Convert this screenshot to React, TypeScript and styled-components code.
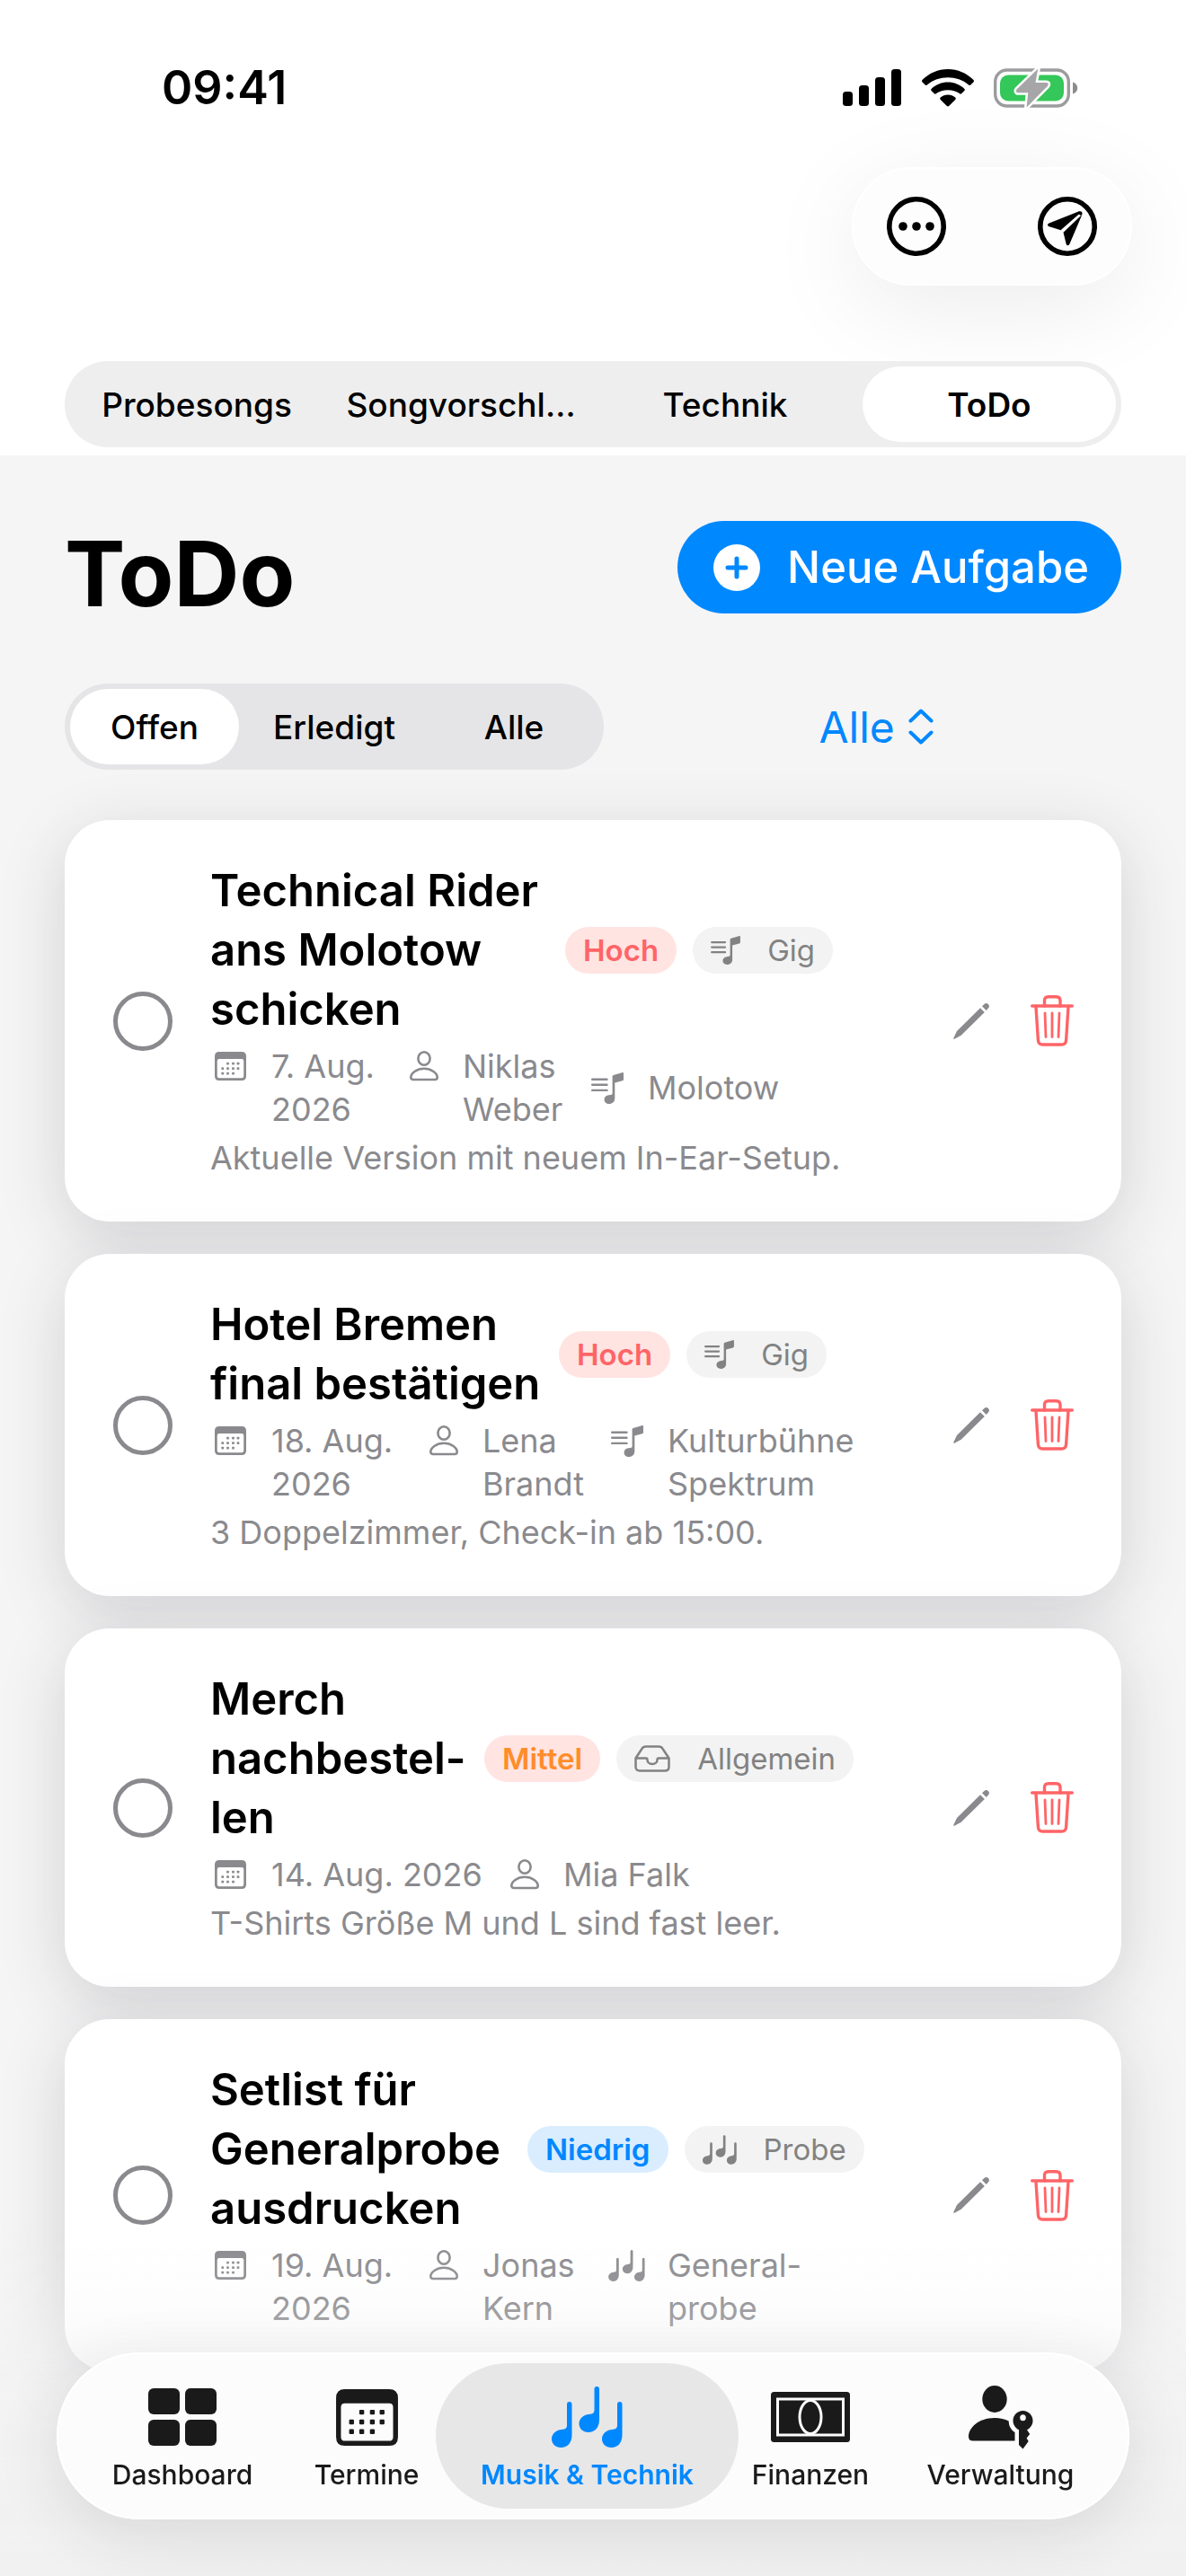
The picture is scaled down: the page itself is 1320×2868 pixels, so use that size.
import React, { useState } from "react";
import styled, { createGlobalStyle } from "styled-components";

const ink = "#000";
const blue = "#0088ff";
const red = "#ff6467";
const gray = "#8a8a8e";

const GlobalStyle = createGlobalStyle`
  *, *::before, *::after { box-sizing: border-box; }
  body {
    margin: 0;
    background: #f5f5f5;
    color: ${ink};
    font-family: Inter, "Liberation Sans", sans-serif;
    -webkit-font-smoothing: antialiased;
  }
  button, select, input { font: inherit; color: inherit; margin: 0; }
  button { border: 0; padding: 0; background: none; cursor: pointer; }
  h1, h2, p, ul { margin: 0; padding: 0; }
  ul { list-style: none; }
  svg { display: block; flex: none; }
`;

/* ---------- icons ---------- */

type IconProps = { width: number; height: number };

const SignalIcon = () => (
  <svg width="66" height="42" viewBox="0 0 66 42" aria-hidden="true">
    <rect x="0" y="25" width="11" height="16" rx="3.500" />
    <rect x="18" y="18" width="11" height="23" rx="3.500" />
    <rect x="36" y="9" width="11" height="32" rx="3.500" />
    <rect x="54" y="0" width="11" height="41" rx="3.500" />
  </svg>
);

const WifiIcon = () => (
  <svg width="58" height="42" viewBox="0 0 58 42" aria-hidden="true">
    <path d="M29 0C40 0 50 4.500 57.300 11.800C58.200 12.700 58.200 13.600 57.400 14.400L54.600 17.200C53.700 18.100 52.700 18.100 51.800 17.300C45.800 12 37.500 9.300 29 9.300C20.500 9.300 12.200 12 6.200 17.300C5.300 18.100 4.300 18.100 3.400 17.200L0.600 14.400C-0.200 13.600 -0.200 12.700 0.700 11.800C8 4.500 18 0 29 0Z" />
    <path d="M29 14.500C36 14.500 42.400 17.200 47.200 21.700C48 22.500 48 23.400 47.200 24.200L44.300 27.100C43.600 27.800 42.700 27.800 41.900 27.100C38.500 24.600 33.900 23.300 29 23.300C24.100 23.300 19.500 24.600 16.100 27.100C15.300 27.800 14.400 27.800 13.700 27.100L10.800 24.200C10 23.400 10 22.500 10.800 21.700C15.600 17.200 22 14.500 29 14.500Z" />
    <path d="M29 28.500C32.200 28.500 35 29.700 37.200 31.600C38 32.300 38 33.200 37.200 34L30.400 40.700C29.500 41.600 28.500 41.600 27.600 40.700L20.800 34C20 33.200 20 32.300 20.800 31.600C23 29.700 25.800 28.500 29 28.500Z" />
  </svg>
);

const BatteryIcon = () => (
  <svg width="94" height="46" viewBox="0 0 94 46" aria-hidden="true">
    <rect x="1.700" y="3" width="81.600" height="40" rx="13" fill="none" stroke="#9c9c9e" strokeWidth="3.400" />
    <rect x="7" y="8.500" width="71" height="29" rx="9" fill="#34c759" />
    <path d="M88 16.500C91.500 17.500 93.200 20 93.200 23S91.500 28.500 88 29.500Z" fill="#8c8c8e" />
    <path d="M49.300 1.500L26 24C24.200 26 24.800 28.300 27.500 28.300H38.200L36.600 44.500L59.800 21C61.500 19 60.800 17 58.200 17H46.500Z" fill="#a6a6a8" stroke="#fff" strokeWidth="5" strokeLinejoin="round" paintOrder="stroke" />
  </svg>
);

const MoreIcon = () => (
  <svg width="66" height="66" viewBox="0 0 66 66" aria-hidden="true">
    <circle cx="33" cy="33" r="30.200" fill="none" stroke="#000" strokeWidth="5.600" />
    <circle cx="18" cy="33" r="4.800" />
    <circle cx="33" cy="33" r="4.800" />
    <circle cx="48" cy="33" r="4.800" />
  </svg>
);

const SendIcon = () => (
  <svg width="66" height="66" viewBox="0 0 66 66" aria-hidden="true">
    <circle cx="33" cy="33" r="30.200" fill="none" stroke="#000" strokeWidth="5.600" />
    <path d="M46 16.300L12.600 29.600C10.500 30.500 10.600 32.700 12.800 33.200L25.600 37.200L47.500 18Z" />
    <path d="M49.400 19.800L28.500 39.800L31.600 52.500C32.200 54.800 34.700 54.800 35.500 52.600Z" />
    <path d="M45.500 16.500C48.600 15.600 50.200 17.200 49.200 20.300L47.300 20.800L45.200 18.700Z" />
  </svg>
);

const PlusIcon = () => (
  <svg width="52" height="52" viewBox="0 0 52 52" aria-hidden="true">
    <circle cx="26" cy="26" r="26" fill="#fff" />
    <path d="M26 16V36M16 26H36" stroke={blue} strokeWidth="5" strokeLinecap="round" />
  </svg>
);

const ChevronsIcon = () => (
  <svg width="28" height="40" viewBox="0 0 28 40" fill="none" stroke={blue} strokeWidth="4" strokeLinecap="round" strokeLinejoin="round" aria-hidden="true">
    <path d="M2.500 13.500L14 2.500L25.500 13.500M2.500 26.500L14 37.500L25.500 26.500" />
  </svg>
);

const CalendarIcon = ({ width, height }: IconProps) => (
  <svg width={width} height={height} viewBox="0 0 70 64" fill="currentColor" aria-hidden="true">
    <path fillRule="evenodd" d="M10 0H60Q70 0 70 10V54Q70 64 60 64H10Q0 64 0 54V10Q0 0 10 0ZM10 16Q5.500 16 5.500 20.500V54Q5.500 58.500 10 58.500H60Q64.500 58.500 64.500 54V20.500Q64.500 16 60 16Z" />
    {[[29, 26], [41, 26], [52, 26], [17.5, 37], [29, 37], [41, 37], [52, 37], [17.5, 48], [29, 48], [41, 48]].map(([x, y]) => (
      <rect key={`${x}-${y}`} x={x - 2.75} y={y - 2.75} width="5.500" height="5.500" rx="1.200" />
    ))}
  </svg>
);

const PersonIcon = () => (
  <svg width="32" height="34" viewBox="0 0 32 34" fill="none" stroke="currentColor" strokeWidth="2.600" aria-hidden="true">
    <ellipse cx="16" cy="8.500" rx="6.600" ry="7.200" />
    <path d="M4 32C2.300 32 1.300 31 1.300 29.500C1.300 25 7.500 19.800 16 19.800S30.700 25 30.700 29.500C30.700 31 29.700 32 28 32Z" />
  </svg>
);

const SetlistIcon = ({ width, height }: IconProps) => (
  <svg width={width} height={height} viewBox="0 0 36 35" fill="currentColor" aria-hidden="true">
    <path d="M1.200 7.700H17.500M1.200 13.800H17.500M1.200 19.900H17.500" stroke="currentColor" strokeWidth="2.400" strokeLinecap="round" />
    <path d="M23.600 4.600C23.600 3.700 24 3.200 24.800 2.900L34.200 0.200C35.400 -0.100 36 0.400 36 1.500V7.400C36 8.400 35.600 8.900 34.700 9.200L26.300 11.500V29C26.300 32.600 23.500 35 20 35C16.800 35 14.600 33 14.600 30.200C14.600 27.400 16.500 25.700 19.400 25.300L21.800 25C23.100 24.800 23.600 24.200 23.600 22.900Z" />
  </svg>
);

const noteShape =
  "M17 3Q17 0 19.750 0Q22.500 0 22.500 3V37C22.500 46 17 51 10.500 51C4 51 0 46.500 0 41.500C0 35.500 5 31.500 11 31C15 30.700 17 29.500 17 26Z";

const NotesIcon = ({ width, height }: IconProps) => (
  <svg width={width} height={height} viewBox="0 0 79 68" fill="currentColor" aria-hidden="true">
    <path d={noteShape} transform="translate(0 17)" />
    <path d={noteShape} transform="translate(30.500 0)" />
    <path d={noteShape} transform="translate(56 17)" />
  </svg>
);

const TrayIcon = () => (
  <svg width="40" height="30" viewBox="0 0 40 30" fill="none" stroke="currentColor" strokeWidth="2.500" strokeLinejoin="round" aria-hidden="true">
    <path d="M1.500 14.500L8.300 4.200C9.400 2.300 10.700 1.500 12.800 1.500H27.200C29.300 1.500 30.600 2.300 31.700 4.200L38.500 14.500V24C38.500 27 36.800 28.500 34 28.500H6C3.200 28.500 1.500 27 1.500 24Z" />
    <path d="M1.500 14.500H13C14 14.500 14.500 15.200 14.500 16.200C14.500 19 16.700 21 20 21S25.500 19 25.500 16.200C25.500 15.200 26 14.500 27 14.500H38.500" />
  </svg>
);

const PencilIcon = () => (
  <svg width="42" height="42" viewBox="0 0 42 42" fill={gray} aria-hidden="true">
    <path d="M31 6.200L35.800 11L9.700 36.700L2.300 40.700C1.500 41 1 40.500 1.300 39.700L5 32Z" />
    <path d="M33 4.300L35.400 2C36.900 0.600 38.600 0.600 39.900 1.900C41.300 3.200 41.300 5 39.900 6.500L37.700 8.900Z" />
  </svg>
);

const TrashIcon = () => (
  <svg width="48" height="57" viewBox="0 0 48 57" fill="none" stroke={red} strokeWidth="3.400" strokeLinecap="round" strokeLinejoin="round" aria-hidden="true">
    <path d="M1.700 12H46.300" />
    <path d="M15.500 12V6Q15.500 1.700 20 1.700H28.500Q33 1.700 33 6V12" />
    <path d="M6 13L8.400 50Q8.700 55 13.500 55H34.500Q39.300 55 39.600 50L42 13" />
    <path d="M16 20L17 46.500M24 20V46.500M32 20L31 46.500" strokeWidth="2.800" />
  </svg>
);

const DashboardIcon = () => (
  <svg width="76" height="64" viewBox="0 0 76 64" fill="currentColor" aria-hidden="true">
    <rect width="35" height="29" rx="6" />
    <rect x="41" width="35" height="29" rx="6" />
    <rect y="35" width="35" height="29" rx="6" />
    <rect x="41" y="35" width="35" height="29" rx="6" />
  </svg>
);

const BanknoteIcon = () => (
  <svg width="88" height="56" viewBox="0 0 88 56" fill="currentColor" aria-hidden="true">
    <rect width="88" height="56" rx="3.500" />
    <rect x="7.500" y="8" width="73" height="40" fill="none" stroke="#fcfcfc" strokeWidth="3" />
    <ellipse cx="44" cy="28" rx="12" ry="18.500" stroke="#fcfcfc" strokeWidth="3" />
  </svg>
);

const PersonKeyIcon = () => (
  <svg width="72" height="71" viewBox="0 0 72 71" fill="currentColor" aria-hidden="true">
    <ellipse cx="29" cy="15" rx="13.700" ry="15" />
    <path d="M5 61.500C1.800 61.500 0 60 0 57C0 47 11 36 29 36C35 36 40.500 37.200 44.700 39.500C44.700 45 47.300 49.200 51.500 52V61.500Z" />
    <path fillRule="evenodd" d="M60.500 28C66.700 28 71.500 33 71.500 39C71.500 43.600 69 47.300 65 49.200L68.200 54L64.600 58.500L66.700 62L60.500 70.500L56 66V49.200C52 47.300 49.500 43.600 49.500 39C49.500 33 54.300 28 60.500 28ZM60.500 32.300A3.300 3.500 0 1 0 60.500 39.300A3.300 3.500 0 1 0 60.500 32.300Z" />
  </svg>
);

/* ---------- layout ---------- */

const Page = styled.div`
  display: flex;
  flex-direction: column;
  min-height: 100vh;
`;

const Header = styled.header`
  display: flex;
  flex-direction: column;
  background: #fff;
  padding-bottom: 9px;
`;

const StatusBar = styled.div`
  display: flex;
  justify-content: space-between;
  align-items: flex-start;
  height: 186px;
  padding: 66px 120px 0 180px;
`;

const Clock = styled.time`
  font-size: 52px;
  font-weight: 600;
  line-height: 63px;
`;

const StatusIcons = styled.div`
  display: flex;
  align-items: center;
  gap: 22px;
  height: 63px;
`;

const Toolbar = styled.div`
  display: flex;
  align-self: flex-end;
  gap: 36px;
  margin-right: 60px;
  padding: 0 6px;
  border-radius: 66px;
  background: #fdfdfd;
  box-shadow: 0 24px 108px rgba(0, 0, 0, 0.08), inset 0 0 0 2px #fff;
`;

const ToolButton = styled.button`
  display: grid;
  place-items: center;
  width: 132px;
  height: 132px;
`;

const Segments = styled.div<{ $tint: string }>`
  display: flex;
  border-radius: 48px;
  background: ${(p) => p.$tint};
`;

const TopSegments = styled(Segments)`
  margin: 84px 72px 0;
`;

const FilterSegments = styled(Segments)`
  flex: 0 1 600px;
`;

const Segment = styled.button<{ $strong?: boolean }>`
  flex: 1 1 0;
  min-width: 0;
  height: 84px;
  margin: 6px;
  border-radius: 42px;
  font-size: 37px;
  font-weight: 500;
  white-space: nowrap;
  &[aria-selected="true"] {
    background: #fff;
    font-weight: ${(p) => (p.$strong ? 600 : 500)};
  }
`;

const Main = styled.main`
  display: flex;
  flex-direction: column;
  padding: 73px 72px 220px;
`;

const TitleRow = styled.div`
  display: flex;
  justify-content: space-between;
  align-items: flex-start;
`;

const Title = styled.h1`
  font-size: 101px;
  font-weight: 700;
  line-height: 117px;
`;

const NewButton = styled.button`
  display: flex;
  align-items: center;
  gap: 30px;
  height: 103px;
  padding: 0 36px 0 40px;
  border-radius: 52px;
  background: ${blue};
  color: #fff;
  font-size: 49px;
  font-weight: 500;
`;

const FilterRow = styled.div`
  display: flex;
  gap: 30px;
  margin-top: 64px;
`;

const Picker = styled.label`
  flex: 1;
  display: flex;
  align-items: center;
  justify-content: center;
  gap: 14px;
  color: ${blue};
`;

const PickerSelect = styled.select`
  appearance: none;
  border: 0;
  padding: 0;
  background: none;
  font-size: 48px;
`;

const TaskList = styled.ul`
  display: flex;
  flex-direction: column;
  gap: 36px;
  margin-top: 56px;
`;

const Card = styled.li`
  display: flex;
  align-items: center;
  padding: 46px 53px 46px 54px;
  border-radius: 50px;
  background: #fff;
  box-shadow: 0 18px 72px rgba(40, 40, 60, 0.17);
`;

const DoneBox = styled.input`
  appearance: none;
  flex: none;
  width: 66px;
  height: 66px;
  margin-right: 42px;
  border: 5px solid ${gray};
  border-radius: 50%;
  &:checked { background: ${gray}; }
`;

const TaskBody = styled.div`
  flex: 1;
  min-width: 0;
  display: flex;
  flex-direction: column;
  gap: 6px;
`;

const TaskHead = styled.div`
  display: flex;
  align-items: center;
  gap: 18px;
`;

const TaskTitle = styled.h2<{ $measure: number }>`
  width: ${(p) => p.$measure}px;
  font-size: 49px;
  font-weight: 600;
  line-height: 66px;
  white-space: nowrap;
`;

const tones = {
  high: { text: red, fill: "#ffe4e2" },
  medium: { text: "#ff8d28", fill: "#ffe4e2" },
  low: { text: blue, fill: "#d9edff" },
  plain: { text: "#828282", fill: "#f3f3f3" },
};

const Badge = styled.span<{ $tone: keyof typeof tones }>`
  display: flex;
  align-items: center;
  gap: 30px;
  height: 52px;
  padding: 0 20px;
  border-radius: 26px;
  background: ${(p) => tones[p.$tone].fill};
  color: ${(p) => tones[p.$tone].text};
  font-size: 33px;
  font-weight: ${(p) => (p.$tone === "plain" ? 400 : 600)};
  white-space: nowrap;
`;

const MetaRow = styled.div`
  display: flex;
  align-items: center;
  gap: 24px;
  color: ${gray};
  font-size: 36px;
  line-height: 48px;
`;

const MetaItem = styled.div`
  display: flex;
  align-items: flex-start;
  gap: 24px;
`;

const MetaIcon = styled.span<{ $width: number }>`
  display: grid;
  place-items: center;
  width: ${(p) => p.$width}px;
  height: 48px;
`;

const MetaText = styled.span<{ $measure?: number }>`
  width: ${(p) => (p.$measure ? `${p.$measure}px` : "auto")};
`;

const Note = styled.p`
  color: ${gray};
  font-size: 36px;
  line-height: 49px;
`;

const Actions = styled.div`
  display: flex;
  align-items: center;
  gap: 45px;
`;

const BottomFade = styled.div`
  position: fixed;
  inset: auto 0 0 0;
  height: 390px;
  background: linear-gradient(
    rgba(244, 244, 244, 0),
    rgba(243, 243, 243, 0.16) 22%,
    rgba(241, 241, 241, 0.52) 42%,
    rgba(240, 240, 240, 0.8)
  );
  pointer-events: none;
`;

const TabBar = styled.nav`
  position: fixed;
  inset: auto 63px 63px 63px;
  display: grid;
  grid-template-columns: 256fr 154fr 337fr 160fr 263fr;
  padding: 12px;
  border-radius: 93px;
  background: #fcfcfc;
  box-shadow: 0 18px 72px rgba(40, 40, 60, 0.12), inset 0 0 0 2px #fff;
`;

const Tab = styled.a`
  display: flex;
  flex-direction: column;
  align-items: center;
  height: 162px;
  padding-top: 20px;
  border-radius: 81px;
  color: #1a1a1a;
  font-size: 30px;
  font-weight: 500;
  line-height: 36px;
  text-decoration: none;
  white-space: nowrap;
  &[aria-current="page"] {
    background: #e7e7e8;
    color: ${blue};
    font-weight: 600;
  }
`;

const TabIcon = styled.span`
  display: grid;
  place-items: center;
  height: 80px;
  margin-bottom: 6px;
`;

/* ---------- data ---------- */

type Category = "gig" | "probe" | "general";

type Meta = { text: string; measure?: number };

type Task = {
  id: string;
  title: string[];
  titleMeasure: number;
  tone: "high" | "medium" | "low";
  priority: string;
  category: Category;
  categoryLabel: string;
  date: Meta;
  person: Meta;
  event?: Meta;
  note?: string;
};

const tasks: Task[] = [
  {
    id: "rider",
    title: ["Technical Rider", "ans Molotow", "schicken"],
    titleMeasure: 377,
    tone: "high",
    priority: "Hoch",
    category: "gig",
    categoryLabel: "Gig",
    date: { text: "7. Aug. 2026", measure: 126 },
    person: { text: "Niklas Weber", measure: 115 },
    event: { text: "Molotow" },
    note: "Aktuelle Version mit neuem In-Ear-Setup.",
  },
  {
    id: "hotel",
    title: ["Hotel Bremen", "final bestätigen"],
    titleMeasure: 370,
    tone: "high",
    priority: "Hoch",
    category: "gig",
    categoryLabel: "Gig",
    date: { text: "18. Aug. 2026", measure: 148 },
    person: { text: "Lena Brandt", measure: 115 },
    event: { text: "Kulturbühne Spektrum", measure: 220 },
    note: "3 Doppelzimmer, Check-in ab 15:00.",
  },
  {
    id: "merch",
    title: ["Merch", "nachbestel-", "len"],
    titleMeasure: 287,
    tone: "medium",
    priority: "Mittel",
    category: "general",
    categoryLabel: "Allgemein",
    date: { text: "14. Aug. 2026", measure: 238 },
    person: { text: "Mia Falk" },
    note: "T-Shirts Größe M und L sind fast leer.",
  },
  {
    id: "setlist",
    title: ["Setlist für", "Generalprobe", "ausdrucken"],
    titleMeasure: 335,
    tone: "low",
    priority: "Niedrig",
    category: "probe",
    categoryLabel: "Probe",
    date: { text: "19. Aug. 2026", measure: 148 },
    person: { text: "Jonas Kern", measure: 115 },
    event: { text: "General-probe", measure: 160 },
  },
];

const tabs = [
  { label: "Dashboard", icon: <DashboardIcon /> },
  { label: "Termine", icon: <CalendarIcon width={69} height={63} /> },
  { label: "Musik & Technik", icon: <NotesIcon width={79} height={68} /> },
  { label: "Finanzen", icon: <BanknoteIcon /> },
  { label: "Verwaltung", icon: <PersonKeyIcon /> },
];

const CategoryIcon = ({ category, small }: { category: Category; small?: boolean }) => {
  if (category === "general") return <TrayIcon />;
  if (category === "probe") return <NotesIcon width={small ? 38 : 41} height={small ? 33 : 35} />;
  return <SetlistIcon width={small ? 33 : 36} height={small ? 32 : 35} />;
};

const TaskCard = ({ task }: { task: Task }) => (
  <Card>
    <DoneBox type="checkbox" aria-label={task.title.join(" ")} />
    <TaskBody>
      <TaskHead>
        <TaskTitle $measure={task.titleMeasure}>
          {task.title.map((line, i) => (
            <React.Fragment key={line}>
              {i > 0 && <br />}
              {line}
            </React.Fragment>
          ))}
        </TaskTitle>
        <Badge $tone={task.tone}>{task.priority}</Badge>
        <Badge $tone="plain">
          <CategoryIcon category={task.category} small />
          {task.categoryLabel}
        </Badge>
      </TaskHead>
      <MetaRow>
        <MetaItem>
          <MetaIcon $width={44}>
            <CalendarIcon width={35} height={32} />
          </MetaIcon>
          <MetaText $measure={task.date.measure}>{task.date.text}</MetaText>
        </MetaItem>
        <MetaItem>
          <MetaIcon $width={39}>
            <PersonIcon />
          </MetaIcon>
          <MetaText $measure={task.person.measure}>{task.person.text}</MetaText>
        </MetaItem>
        {task.event && (
          <MetaItem>
            <MetaIcon $width={43}>
              <CategoryIcon category={task.category} />
            </MetaIcon>
            <MetaText $measure={task.event.measure}>{task.event.text}</MetaText>
          </MetaItem>
        )}
      </MetaRow>
      {task.note && <Note>{task.note}</Note>}
    </TaskBody>
    <Actions>
      <button type="button" aria-label="Bearbeiten">
        <PencilIcon />
      </button>
      <button type="button" aria-label="Löschen">
        <TrashIcon />
      </button>
    </Actions>
  </Card>
);

export default function App() {
  const [section, setSection] = useState("ToDo");
  const [filter, setFilter] = useState("Offen");

  return (
    <Page>
      <GlobalStyle />
      <Header>
        <StatusBar>
          <Clock>09:41</Clock>
          <StatusIcons>
            <SignalIcon />
            <WifiIcon />
            <BatteryIcon />
          </StatusIcons>
        </StatusBar>
        <Toolbar>
          <ToolButton type="button" aria-label="Mehr">
            <MoreIcon />
          </ToolButton>
          <ToolButton type="button" aria-label="Senden">
            <SendIcon />
          </ToolButton>
        </Toolbar>
        <TopSegments $tint="#eeeeee" role="tablist">
          {["Probesongs", "Songvorschl…", "Technik", "ToDo"].map((name) => (
            <Segment key={name} type="button" role="tab" $strong aria-selected={section === name} onClick={() => setSection(name)}>
              {name}
            </Segment>
          ))}
        </TopSegments>
      </Header>
      <Main>
        <TitleRow>
          <Title>ToDo</Title>
          <NewButton type="button">
            <PlusIcon />
            Neue Aufgabe
          </NewButton>
        </TitleRow>
        <FilterRow>
          <FilterSegments $tint="#e5e5e7" role="tablist">
            {["Offen", "Erledigt", "Alle"].map((name) => (
              <Segment key={name} type="button" role="tab" aria-selected={filter === name} onClick={() => setFilter(name)}>
                {name}
              </Segment>
            ))}
          </FilterSegments>
          <Picker>
            <PickerSelect aria-label="Kategorie">
              <option>Alle</option>
            </PickerSelect>
            <ChevronsIcon />
          </Picker>
        </FilterRow>
        <TaskList>
          {tasks.map((task) => (
            <TaskCard key={task.id} task={task} />
          ))}
        </TaskList>
      </Main>
      <BottomFade />
      <TabBar>
        {tabs.map((tab) => (
          <Tab key={tab.label} href="#" aria-current={tab.label === "Musik & Technik" ? "page" : undefined}>
            <TabIcon>{tab.icon}</TabIcon>
            {tab.label}
          </Tab>
        ))}
      </TabBar>
    </Page>
  );
}
